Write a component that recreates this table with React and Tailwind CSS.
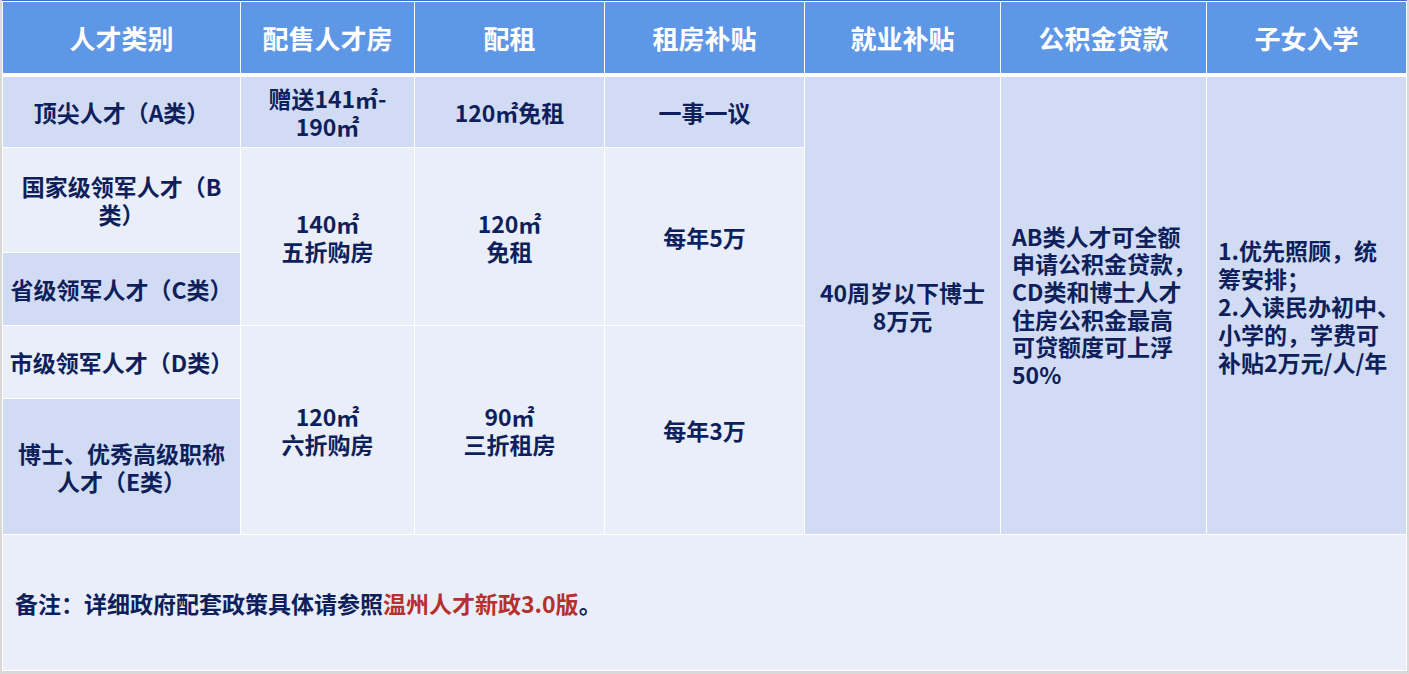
import React from "react";

const FONT = { fontFamily: '"Noto Sans CJK SC", "Noto Sans", sans-serif' };

const HEADERS = ["人才类别", "配售人才房", "配租", "租房补贴", "就业补贴", "公积金贷款", "子女入学"];

const DARK = "bg-[#d1dcf4]";
const LIGHT = "bg-[#e9eef9]";

const Cell = ({ className = "", children }) => (
  <div className={`flex items-center justify-center text-center whitespace-nowrap ${className}`}>
    <div>{children}</div>
  </div>
);

export default function App() {
  return (
    <div className="w-[1409px] h-[674px] bg-[#d9d9d9] overflow-hidden" style={FONT}>
      <div className="ml-[2px] w-[1405px] h-[671px] bg-white border-t border-[#3f72c4] pt-px px-px pb-px font-bold text-[#0e1f5b] text-[23px] leading-[28px]">

        {/* Header */}
        <div className="grid grid-cols-[237px_173px_189px_199px_195px_205px_199px] gap-x-px h-[71px]">
          {HEADERS.map(h => (
            <div key={h} className="bg-[#5f97e7] text-white text-[26px] flex items-center justify-center">
              {h}
            </div>
          ))}
        </div>

        {/* Body */}
        <div className="mt-[4px] grid grid-cols-[237px_173px_189px_199px_195px_205px_199px] grid-rows-[70px_104px_72px_72px_135px] gap-px">
          {/* Row A */}
          <Cell className={DARK}>顶尖人才（A类）</Cell>
          <Cell className={DARK}>赠送141㎡-<br />190㎡</Cell>
          <Cell className={DARK}>120㎡免租</Cell>
          <Cell className={DARK}>一事一议</Cell>

          <Cell className={`${DARK} col-start-5 row-start-1 row-span-5`}>40周岁以下博士<br />8万元</Cell>

          <div className={`${DARK} col-start-6 row-start-1 row-span-5 flex items-center pl-[11px] whitespace-nowrap leading-[27.6px]`}>
            <div>
              AB类人才可全额<br />
              申请公积金贷款，<br />
              CD类和博士人才<br />
              住房公积金最高<br />
              可贷额度可上浮<br />
              50%
            </div>
          </div>

          <div className={`${DARK} col-start-7 row-start-1 row-span-5 flex items-center pl-[11px] whitespace-nowrap`}>
            <div>
              1.优先照顾，统<br />
              筹安排；<br />
              2.入读民办初中、<br />
              小学的，学费可<br />
              补贴2万元/人/年
            </div>
          </div>

          {/* Row B */}
          <Cell className={`${LIGHT} col-start-1 row-start-2`}>国家级领军人才（B<br />类）</Cell>
          <Cell className={`${LIGHT} col-start-2 row-start-2 row-span-2`}>140㎡<br />五折购房</Cell>
          <Cell className={`${LIGHT} col-start-3 row-start-2 row-span-2`}>120㎡<br />免租</Cell>
          <Cell className={`${LIGHT} col-start-4 row-start-2 row-span-2`}>每年5万</Cell>

          {/* Row C */}
          <Cell className={`${DARK} col-start-1 row-start-3`}>省级领军人才（C类）</Cell>

          {/* Row D */}
          <Cell className={`${LIGHT} col-start-1 row-start-4`}>市级领军人才（D类）</Cell>
          <Cell className={`${LIGHT} col-start-2 row-start-4 row-span-2`}>120㎡<br />六折购房</Cell>
          <Cell className={`${LIGHT} col-start-3 row-start-4 row-span-2`}>90㎡<br />三折租房</Cell>
          <Cell className={`${LIGHT} col-start-4 row-start-4 row-span-2`}>每年3万</Cell>

          {/* Row E */}
          <Cell className={`${DARK} col-start-1 row-start-5`}>博士、优秀高级职称<br />人才（E类）</Cell>
        </div>

        {/* Note */}
        <div className={`${LIGHT} mt-px h-[135px] flex items-center pl-[12px]`}>
          <span>
            备注：详细政府配套政策具体请参照<span className="text-[#b5312e]">温州人才新政3.0版</span>。
          </span>
        </div>
      </div>
    </div>
  );
}
